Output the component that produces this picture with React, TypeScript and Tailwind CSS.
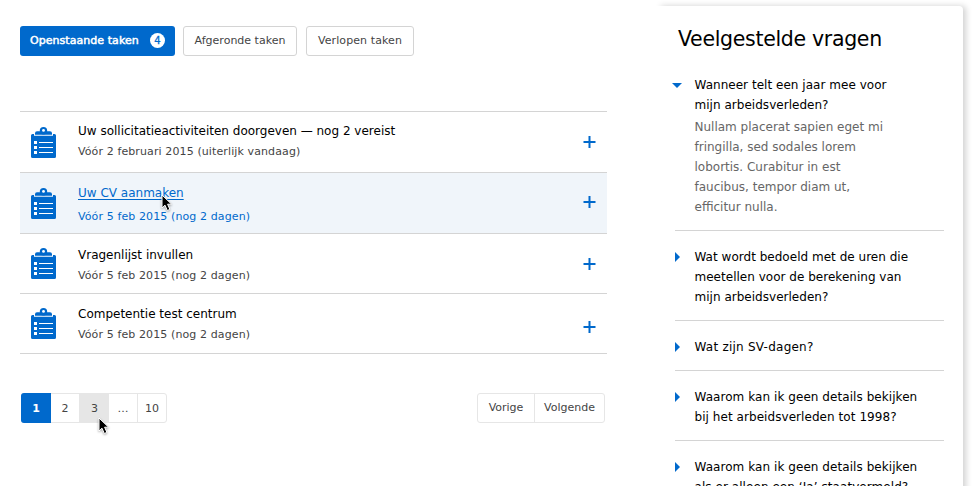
const BLUE = '#0069cc';

function Clipboard() {
  return (
    <svg width="25" height="31" viewBox="0 0 25 31" className="block shrink-0">
      <path d="M1.500 7H3v1.700h19V7h1.500A1.500 1.500 0 0 1 25 8.500v21a1.500 1.500 0 0 1-1.500 1.500h-22A1.500 1.500 0 0 1 0 29.500v-21A1.500 1.500 0 0 1 1.500 7z" fill={BLUE} />
      <path d="M4 7.700V6.300a2 2 0 0 1 2-2h13a2 2 0 0 1 2 2v1.400z" fill={BLUE} />
      <circle cx="12.500" cy="3.700" r="3.700" fill={BLUE} />
      <circle cx="12.500" cy="3.400" r="1.400" fill="#fff" />
      <path d="M3 14h3v3H3zM3 19h3v3H3zM3 24h3v3H3zM8 15h14v1H8zM8 20h14v1H8zM8 25h14v1H8z" fill="#fff" />
    </svg>
  );
}

function Plus() {
  return (
    <svg width="13" height="12" viewBox="0 0 13 12" className="block shrink-0">
      <path d="M.5 5h12v2H.5zM5.500 0h2v12h-2z" fill={BLUE} />
    </svg>
  );
}

function Cursor({ className }: { className: string }) {
  return (
    <svg width="14" height="20" viewBox="0 0 14 20" className={'absolute drop-shadow-[0_1px_1px_rgba(0,0,0,0.35)] ' + className}>
      <path d="M1 1v13l3-2.800 2.300 5.300 2.600-1.100-2.300-5.200h4z" fill="#000" stroke="#fff" strokeWidth="1" />
    </svg>
  );
}

const tasks = [
  { title: 'Uw sollicitatieactiviteiten doorgeven — nog 2 vereist', due: 'Vóór 2 februari 2015 (uiterlijk vandaag)', row: 'h-[61px]', icon: 'pt-[15px]', text: 'pt-[9px]', gap: 'mt-px', plus: 'pt-[24px]' },
  { title: 'Uw CV aanmaken', due: 'Vóór 5 feb 2015 (nog 2 dagen)', row: 'h-[61px] bg-[#f0f5fa]', icon: 'pt-[15px]', text: 'pt-[10px]', gap: 'mt-[4px]', plus: 'pt-[23px]', active: true },
  { title: 'Vragenlijst invullen', due: 'Vóór 5 feb 2015 (nog 2 dagen)', row: 'h-[60px]', icon: 'pt-[14px]', text: 'pt-[11px]', gap: 'mt-px', plus: 'pt-[24px]' },
  { title: 'Competentie test centrum', due: 'Vóór 5 feb 2015 (nog 2 dagen)', row: 'h-[60px]', icon: 'pt-[14px]', text: 'pt-[10px]', gap: 'mt-px', plus: 'pt-[27px]' },
];

const faqs = [
  { lines: ['Wat wordt bedoeld met de uren die', 'meetellen voor de berekening van', 'mijn arbeidsverleden?'], border: true, tracking: 'tracking-[0.020px]' },
  { lines: ['Wat zijn SV-dagen?'], border: true, tracking: 'tracking-[0.240px]' },
  { lines: ['Waarom kan ik geen details bekijken', 'bij het arbeidsverleden tot 1998?'], border: true, tracking: 'tracking-[0.060px]' },
  { lines: ['Waarom kan ik geen details bekijken', 'als er alleen een ‘Ja’ staatvermeld?'], border: false, tracking: 'tracking-[0.060px]' },
];

export default function App() {
  return (
    <div className="flex h-[486px] w-[974px] overflow-hidden bg-white font-['Verdana','DejaVu_Sans',sans-serif] text-[12px] text-black">
      <main className="w-[587px] shrink-0 ml-5 pt-[26px]">
        <nav className="flex h-[30px] text-[11px] text-[#444]">
          <button className="flex w-[155px] items-center justify-between rounded-[3px] bg-[#0069cc] pr-[10px] pl-[10px] text-white">
            <span className="tracking-[0.050px] whitespace-nowrap [-webkit-text-stroke:0.5px_white]">Openstaande taken</span>
            <span className="mb-px flex size-[15px] items-center justify-center rounded-full bg-white text-[10px] text-[#0069cc] [-webkit-text-stroke:0.3px_#0069cc]">4</span>
          </button>
          <button className="ml-2 w-[114px] rounded-[3px] border border-[#d4d4d4] whitespace-nowrap">Afgeronde taken</button>
          <button className="ml-[9px] w-[108px] rounded-[3px] border border-[#d4d4d4] tracking-[0.100px] whitespace-nowrap">Verlopen taken</button>
        </nav>

        <ul className="mt-[55px] border-t border-[#d4d4d4]">
          {tasks.map((t) => (
            <li key={t.title} className={'relative flex border-b border-[#d4d4d4] pl-[11px] pr-[11px] ' + t.row}>
              <div className={t.icon}><Clipboard /></div>
              <div className={'ml-[22px] grow whitespace-nowrap ' + t.text}>
                <div className={'leading-5 ' + (t.active ? 'text-[#0069cc] underline underline-offset-2' : '')}>{t.title}</div>
                <div className={'text-[11px] leading-5 tracking-[0.110px] ' + t.gap + (t.active ? ' text-[#0069cc]' : ' text-[#444]')}>{t.due}</div>
              </div>
              <div className={t.plus}><Plus /></div>
              {t.active && <Cursor className="left-[141px] top-[21px]" />}
            </li>
          ))}
        </ul>

        <div className="mt-[39px] flex justify-between pl-px pr-[2px] text-[11px] text-[#444]">
          <div className="relative flex h-[30px] w-[146px] overflow-visible rounded-[3px] border border-[#e6e6e6] leading-[30px]">
            <span className="-my-px -ml-px w-[30px] rounded-l-[3px] bg-[#0069cc] pt-px text-center font-bold leading-[30px] text-white">1</span>
            <span className="w-[29px] border-r border-[#e6e6e6] text-center">2</span>
            <span className="w-[29px] bg-[#e6e6e6] text-center">3</span>
            <span className="w-[29px] border-r border-[#e6e6e6] text-center">…</span>
            <span className="grow text-center">10</span>
            <Cursor className="left-[76px] top-[23px]" />
          </div>
          <div className="flex h-[30px] w-[128px] rounded-[3px] border border-[#e6e6e6] leading-7">
            <span className="w-[57px] border-r border-[#e6e6e6] text-center">Vorige</span>
            <span className="grow text-center">Volgende</span>
          </div>
        </div>
      </main>

      <aside className="relative ml-[51px] mt-[6px] h-[500px] w-[305px] shrink-0 rounded-tr-[4px] bg-white shadow-[3px_0_6px_rgba(0,0,0,0.18)]">
        <div className="absolute -left-3 top-0 h-full w-4 bg-white" />
        <h1 className="relative pl-[20px] pt-[19px] text-[20.500px] leading-[28px] tracking-[-0.320px] whitespace-nowrap">Veelgestelde vragen</h1>
        <div className="ml-[17px] w-[269px]">
          <section className="flex h-[163px] border-b border-[#d4d4d4] mt-[15px] leading-5 whitespace-nowrap">
            <svg width="10" height="5" viewBox="0 0 10 5" className="mt-[15px] -ml-[3px] shrink-0"><path d="M0 0h10L5 5z" fill={BLUE} /></svg>
            <div className="ml-[12.500px] pt-[7px]">
              <p className="tracking-[0.030px]">Wanneer telt een jaar mee voor<br />mijn arbeidsverleden?</p>
              <p className="mt-[2px] text-[#666]">Nullam placerat sapien eget mi<br />fringilla, sed sodales lorem<br />lobortis. Curabitur in est<br />faucibus, tempor diam ut,<br />efficitur nulla.</p>
            </div>
          </section>
          {faqs.map((f) => (
            <section key={f.lines[1] ?? f.lines[0]} className={'flex pt-[16px] pb-[13px] leading-5 whitespace-nowrap ' + f.tracking + (f.border ? ' border-b border-[#d4d4d4]' : '')}>
              <svg width="5" height="10" viewBox="0 0 5 10" className="mt-[5px] shrink-0"><path d="M0 0l5 5-5 5z" fill={BLUE} /></svg>
              <p className="ml-[14.500px]">{f.lines.map((l) => <span key={l} className="block">{l}</span>)}</p>
            </section>
          ))}
        </div>
      </aside>
    </div>
  );
}
